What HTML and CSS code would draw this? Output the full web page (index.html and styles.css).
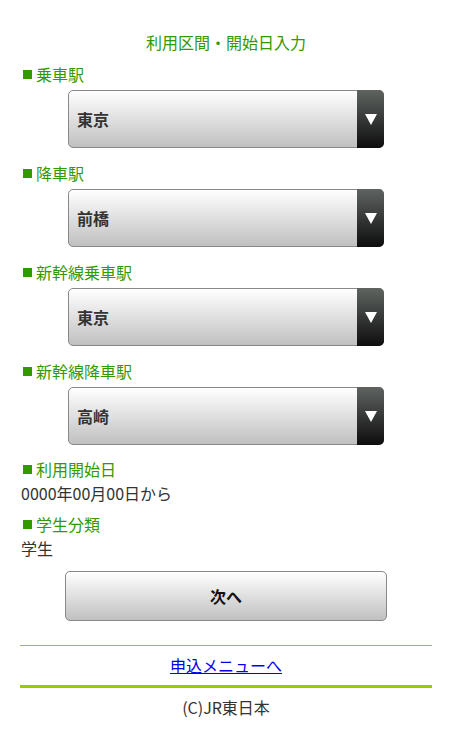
FILE: index.html
```
<!DOCTYPE html>
<html lang="ja">
<head>
  <meta charset="UTF-8">
  <title>利用区間・開始日入力</title>
  <link rel="stylesheet" href="styles.css">
</head>
<body>
  <div class="container">
    <h1 class="title">利用区間・開始日入力</h1>

    <form id="routeForm">
      <div class="field">
        <div class="label">乗車駅</div>
        <div class="select-wrap">
          <select name="from">
            <option>東京</option>
          </select>
          <span class="arrow"></span>
        </div>
      </div>

      <div class="field">
        <div class="label">降車駅</div>
        <div class="select-wrap">
          <select name="to">
            <option>前橋</option>
          </select>
          <span class="arrow"></span>
        </div>
      </div>

      <div class="field">
        <div class="label">新幹線乗車駅</div>
        <div class="select-wrap">
          <select name="shinkansen_from">
            <option>東京</option>
          </select>
          <span class="arrow"></span>
        </div>
      </div>

      <div class="field">
        <div class="label">新幹線降車駅</div>
        <div class="select-wrap">
          <select name="shinkansen_to">
            <option>高崎</option>
          </select>
          <span class="arrow"></span>
        </div>
      </div>

      <div class="info">
        <div class="label">利用開始日</div>
        <div class="value">0000年00月00日から</div>
      </div>

      <div class="info">
        <div class="label">学生分類</div>
        <div class="value">学生</div>
      </div>

      <button type="submit">次へ</button>
    </form>

    <div class="menu-link">
      <a href="#">申込メニューへ</a>
    </div>

    <div class="footer">(C)JR東日本</div>
  </div>
</body>
</html>
```

FILE: styles.css
```
body {
  margin: 0;
  font-family: "Noto Sans CJK JP", "Noto Sans", sans-serif;
  font-size: 16px;
  line-height: 24px;
  color: #333;
  background: #fff;
}

.container {
  padding: 30px 20px 0;
}

.title {
  margin: 0 0 8px;
  font-size: 16px;
  font-weight: normal;
  line-height: 24px;
  text-align: center;
  color: #339900;
}

.label {
  display: flex;
  align-items: center;
  color: #339900;
  padding-left: 3px;
}

/* small green square in front of each heading */
.label::before {
  content: "";
  width: 9px;
  height: 9px;
  margin-right: 4px;
  background: #339900;
}

.field {
  margin-bottom: 13px;
}

.select-wrap {
  position: relative;
  width: 316px;
  height: 58px;
  margin: 4px auto 0;
}

.select-wrap select {
  -webkit-appearance: none;
  appearance: none;
  width: 100%;
  height: 100%;
  padding: 0 40px 0 8px;
  border: 1px solid #888;
  border-radius: 5px;
  background: linear-gradient(to bottom, #ffffff, #c0c0c0);
  font-family: inherit;
  font-size: 16px;
  font-weight: bold;
  color: #333;
  outline: none;
}

.arrow {
  position: absolute;
  top: 0;
  right: 0;
  width: 27px;
  height: 58px;
  border-radius: 0 5px 5px 0;
  background: linear-gradient(to bottom, #5f6461, #0d0d0d);
  pointer-events: none;
}

.arrow::after {
  content: "";
  position: absolute;
  left: 8px;
  top: 24px;
  border-left: 6px solid transparent;
  border-right: 6px solid transparent;
  border-top: 11px solid #fff;
}

.info {
  margin-top: -1px;
  margin-bottom: 8px;
}

.value {
  padding-left: 1px;
}

button {
  display: block;
  width: 322px;
  height: 50px;
  margin: 11px auto 0;
  border: 1px solid #888;
  border-radius: 5px;
  background: linear-gradient(to bottom, #ffffff, #c0c0c0);
  font-family: inherit;
  font-size: 16px;
  font-weight: bold;
  color: #111;
  cursor: pointer;
}

.menu-link {
  margin-top: 24px;
  padding: 7px 0 8px;
  border-top: 1px solid #99cc00;
  border-bottom: 3px solid #99cc00;
  text-align: center;
}

.menu-link a {
  color: #0000ee;
}

.footer {
  padding-top: 7px;
  text-align: center;
  color: #333;
}
```
